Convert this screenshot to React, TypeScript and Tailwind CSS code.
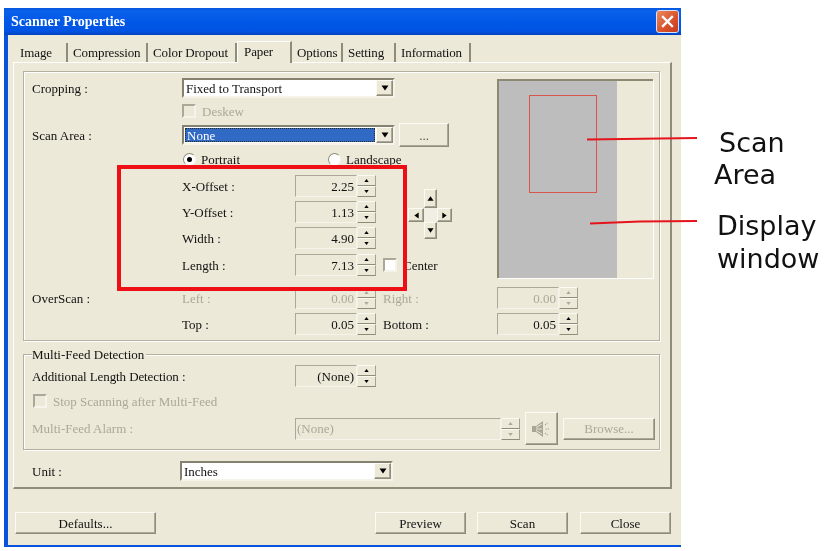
import type { ReactNode } from "react";

const raised =
  "border border-t-[#fbfaf3] border-l-[#fbfaf3] border-r-[#8f8c7a] border-b-[#8f8c7a] shadow-[inset_-1px_-1px_0_#aca899] bg-[#ece9d8]";
const spinBtn =
  "flex h-[11px] items-center justify-center border border-t-[#fbfaf3] border-l-[#f4f2e6] border-r-[#a5a290] border-b-[#8f8c7a] bg-[#ece9d8]";
const sunken =
  "border border-t-[#aca899] border-l-[#aca899] border-r-[#f6f4ea] border-b-[#f6f4ea] bg-[#ece9d8]";
const etched = "border border-[#b4b1a0] shadow-[inset_1px_1px_0_#fff,1px_1px_0_#fff]";

function Tri({ dir, size = 7, color = "#000" }: { dir: "up" | "down" | "left" | "right"; size?: number; color?: string }) {
  const pts = {
    up: "4,1.5 7.5,6.5 0.5,6.5",
    down: "0.5,1.5 7.5,1.5 4,6.5",
    left: "1.5,4 6.5,0.5 6.5,7.5",
    right: "1.5,0.5 6.5,4 1.5,7.5",
  }[dir];
  return (
    <svg width={size} height={size} viewBox="0 0 8 8">
      <polygon points={pts} fill={color} />
    </svg>
  );
}

function SpinButtons({ color }: { color: string }) {
  return (
    <div className="flex w-[19px] flex-col">
      <div className={spinBtn}>
        <Tri dir="up" size={5} color={color} />
      </div>
      <div className={spinBtn}>
        <Tri dir="down" size={5} color={color} />
      </div>
    </div>
  );
}

function Spin({ value, disabled }: { value: string; disabled?: boolean }) {
  return (
    <div className="flex h-[22px] shrink-0">
      <div className={`${sunken} flex w-[62px] items-center justify-end pr-[2px] ${disabled ? "text-[#aca899]" : ""}`}>{value}</div>
      <SpinButtons color={disabled ? "#aca899" : "#000"} />
    </div>
  );
}

function Combo({ value, selected }: { value: string; selected?: boolean }) {
  return (
    <div className="flex h-[20px] w-[213px] shrink-0 items-stretch border-2 border-t-[#85826f] border-l-[#85826f] border-r-[#f6f4ea] border-b-[#f6f4ea] bg-white">
      <div className="flex flex-1 items-center p-[1px]">
        <div
          className={
            selected
              ? "flex h-full w-full items-center border border-dotted border-[#2a2a20] bg-[#316ac5] pl-[1px] text-white"
              : "pl-[1px]"
          }
        >
          {value}
        </div>
      </div>
      <div className={`${raised} flex w-[17px] items-center justify-center`}>
        <Tri dir="down" size={8} />
      </div>
    </div>
  );
}

function Check({ label, disabled, white }: { label: string; disabled?: boolean; white?: boolean }) {
  return (
    <div className={`flex h-[16px] items-center ${disabled ? "text-[#aca899]" : ""}`}>
      <div className={`h-[14px] w-[14px] border-2 border-t-[#aca899] border-l-[#aca899] border-r-[#f6f4ea] border-b-[#f6f4ea] ${white ? "bg-white" : ""}`} />
      <span className="ml-[6px]">{label}</span>
    </div>
  );
}

function Radio({ label, on }: { label: string; on?: boolean }) {
  return (
    <div className="flex h-[16px] items-center">
      <div className="flex h-[13px] w-[13px] items-center justify-center rounded-full border border-t-[#8f8c7a] border-l-[#8f8c7a] border-r-[#f6f4ea] border-b-[#f6f4ea] bg-white">
        {on && <div className="h-[5px] w-[5px] rounded-full bg-black" />}
      </div>
      <span className="ml-[5px]">{label}</span>
    </div>
  );
}

function Button({ children, className }: { children: ReactNode; className?: string }) {
  return <button type="button" className={`${raised} flex h-[22px] items-center justify-center ${className ?? ""}`}>{children}</button>;
}

function OffsetRow({ label, value, children }: { label: string; value: string; children?: ReactNode }) {
  return (
    <div className="flex h-[22px] items-center">
      <div className="w-[113px]">{label}</div>
      <Spin value={value} />
      {children}
    </div>
  );
}

function Pad() {
  const cell = `${raised} flex items-center justify-center`;
  return (
    <div className="mt-[14px] ml-[32px] grid h-[50px] grid-cols-[16px_13px_15px] grid-rows-[19px_14px_17px]">
      <div />
      <div className={cell}><Tri dir="up" /></div>
      <div />
      <div className={cell}><Tri dir="left" /></div>
      <div className="bg-[#f1efe4]" />
      <div className={cell}><Tri dir="right" /></div>
      <div />
      <div className={cell}><Tri dir="down" /></div>
      <div />
    </div>
  );
}

const tabs = [
  { name: "Image", w: "w-[53px]" },
  { name: "Compression", w: "w-[80px]" },
  { name: "Color Dropout", w: "w-[89px]" },
  { name: "Paper", w: "w-[55px]", active: true },
  { name: "Options", w: "w-[51px]" },
  { name: "Setting", w: "w-[53px]" },
  { name: "Information", w: "w-[75px]" },
];

export default function App() {
  return (
    <div className="relative flex h-[551px] w-[826px] overflow-hidden bg-white pt-[8px] pl-[4px] font-['Liberation_Serif',serif] text-[13px] leading-none text-[#111] blur-[0.3px]">
      {/* dialog */}
      <div className="flex h-[539px] w-[677px] shrink-0 flex-col border-b-2 border-l-4 border-[#0a52dc] bg-[#ece9d8]">
        <div className="-ml-[4px] flex h-[27px] shrink-0 items-center bg-[linear-gradient(#0757df,#0a61ea_12%,#0058e6_50%,#0054e3_85%,#0042c0)] pr-[2px] pl-[7px]">
          <span className="text-[14px] font-bold text-white">Scanner Properties</span>
          <div className="ml-auto flex h-[23px] w-[23px] items-center justify-center rounded-[3px] border border-[#d8e2f8] bg-[linear-gradient(135deg,#ea8a5e,#d9502a_60%,#c43c1c)]">
            <svg width="13" height="13" viewBox="0 0 13 13">
              <path d="M2 2 L11 11 M11 2 L2 11" stroke="#fff" strokeWidth="2.4" strokeLinecap="square" />
            </svg>
          </div>
        </div>

        {/* tabs */}
        <div className="mt-[6px] ml-[7px] flex h-[21px] shrink-0 items-end tracking-[-0.1px]">
          {tabs.map((t) =>
            t.active ? (
              <div key={t.name} className={`${t.w} relative z-10 -mb-[1px] flex h-[22px] items-start border-t border-l border-white border-r-2 border-r-[#8f8c7a] bg-[#ece9d8] pt-[3px] pl-[6px]`}>
                {t.name}
              </div>
            ) : (
              <div key={t.name} className={`${t.w} flex h-[19px] items-center border-r-2 border-[#8f8c7a] pl-[5px]`}>
                {t.name}
              </div>
            ),
          )}
        </div>

        {/* page */}
        <div className="ml-[5px] h-[427px] w-[659px] shrink-0 border-t border-l border-white border-r-2 border-b-2 border-r-[#8f8c7a] border-b-[#8f8c7a] pt-[8px] pl-[9px]">
          <div className={`${etched} h-[270px] w-[637px]`}>
            <div className="flex">
              <div className="w-[473px] pl-[8px]">
                <div className="mt-[6px] flex items-center">
                  <div className="w-[150px]">Cropping :</div>
                  <Combo value="Fixed to Transport" />
                </div>
                <div className="mt-[5px] ml-[150px]">
                  <Check label="Deskew" disabled />
                </div>
                <div className="mt-[4px] flex h-[24px] items-center">
                  <div className="w-[150px]">Scan Area :</div>
                  <Combo value="None" selected />
                  <Button className="ml-[4px] h-[24px] w-[50px] text-[#55534a]">...</Button>
                </div>
                <div className="mt-[4px] ml-[151px] flex">
                  <div className="w-[145px]">
                    <Radio label="Portrait" on />
                  </div>
                  <Radio label="Landscape" />
                </div>

                <div className="mt-[8px] ml-[150px] flex">
                  <div className="flex flex-col gap-[4px]">
                    <OffsetRow label="X-Offset :" value="2.25" />
                    <OffsetRow label="Y-Offset :" value="1.13" />
                    <OffsetRow label="Width :" value="4.90" />
                  </div>
                  <Pad />
                </div>
                <div className="mt-[5px] ml-[150px]">
                  <OffsetRow label="Length :" value="7.13">
                    <div className="ml-[7px]">
                      <Check label="Center" white />
                    </div>
                  </OffsetRow>
                </div>
              </div>

              {/* display window */}
              <div className="mt-[7px] flex h-[199px] w-[156px] border-t-2 border-l-2 border-[#8c8972] shadow-[1px_1px_0_#fff]">
                <div className="h-full w-[118px] bg-[#bdbdbd] pt-[14px] pl-[30px]">
                  <div className="h-[98px] w-[68px] border border-[#d9534f]" />
                </div>
              </div>
            </div>

            <div className="mt-[9px] flex h-[22px] items-center pl-[8px]">
              <div className="w-[150px]">OverScan :</div>
              <div className="w-[113px] text-[#aca899]">Left :</div>
              <Spin value="0.00" disabled />
              <div className="ml-[7px] w-[114px] text-[#aca899]">Right :</div>
              <Spin value="0.00" disabled />
            </div>
            <div className="mt-[4px] flex h-[22px] items-center pl-[8px]">
              <div className="w-[150px]" />
              <div className="w-[113px]">Top :</div>
              <Spin value="0.05" />
              <div className="ml-[7px] w-[114px]">Bottom :</div>
              <Spin value="0.05" />
            </div>
          </div>

          <div className={`${etched} relative mt-[13px] h-[96px] w-[637px] pt-[10px] pl-[8px]`}>
            <div className="absolute -top-[7px] left-[8px] bg-[#ece9d8] pr-[2px]">Multi-Feed Detection</div>
            <div className="flex h-[22px] items-center">
              <div className="w-[263px] tracking-[-0.1px]">Additional Length Detection :</div>
              <Spin value="(None)" />
            </div>
            <div className="mt-[6px] ml-[1px]">
              <Check label="Stop Scanning after Multi-Feed" disabled />
            </div>
            <div className="mt-[3px] flex h-[33px] items-center text-[#aca899]">
              <div className="w-[263px]">Multi-Feed Alarm :</div>
              <div className="flex h-[22px] shrink-0">
                <div className={`${sunken} flex w-[206px] items-center pl-[1px]`}>(None)</div>
                <SpinButtons color="#aca899" />
              </div>
              <Button className="ml-[5px] h-[33px] w-[33px]">
                <svg className="shrink-0" width="22" height="18" viewBox="0 0 22 18">
                  <path d="M1 6 L5 6 L12 1 L12 17 L5 12 L1 12 Z" fill="#a9a693" />
                  <path d="M5 7.5 L11 4 M5 9 L11 9 M5 10.5 L11 14" stroke="#efede2" strokeWidth="0.9" />
                  <path d="M14 5 L16.5 3 M14.5 9 L18 9 M14 13 L16.5 15" stroke="#a9a693" strokeWidth="1.2" strokeDasharray="1.4 0.8" fill="none" />
                </svg>
              </Button>
              <Button className="ml-[5px] w-[92px]">Browse...</Button>
            </div>
          </div>

          <div className="mt-[11px] flex items-center pl-[9px]">
            <div className="w-[148px]">Unit :</div>
            <Combo value="Inches" />
          </div>
        </div>

        {/* buttons */}
        <div className="mt-[23px] flex pr-[10px] pl-[7px]">
          <Button className="w-[141px]">Defaults...</Button>
          <Button className="ml-auto w-[91px]">Preview</Button>
          <Button className="ml-[11px] w-[91px]">Scan</Button>
          <Button className="ml-[12px] w-[91px]">Close</Button>
        </div>
      </div>

      {/* callouts */}
      <div className="pt-[119px] font-['DejaVu_Sans',sans-serif] text-[27px] leading-[32px] whitespace-nowrap text-[#111]">
        <div className="ml-[38px]">Scan</div>
        <div className="ml-[33px]">Area</div>
        <div className="mt-[19px] ml-[36px]">Display</div>
        <div className="ml-[36px] leading-[33px]">window</div>
      </div>

      <div className="absolute top-[165px] left-[117px] h-[126px] w-[290px] border-4 border-[#ee0f16]" />
      <svg className="absolute inset-0" width="826" height="551">
        <path d="M587 139.5 L697 138" stroke="#e5141c" strokeWidth="1.8" fill="none" />
        <path d="M590 223.5 L640 221.5 L697 221" stroke="#e5141c" strokeWidth="1.8" fill="none" />
      </svg>
    </div>
  );
}
